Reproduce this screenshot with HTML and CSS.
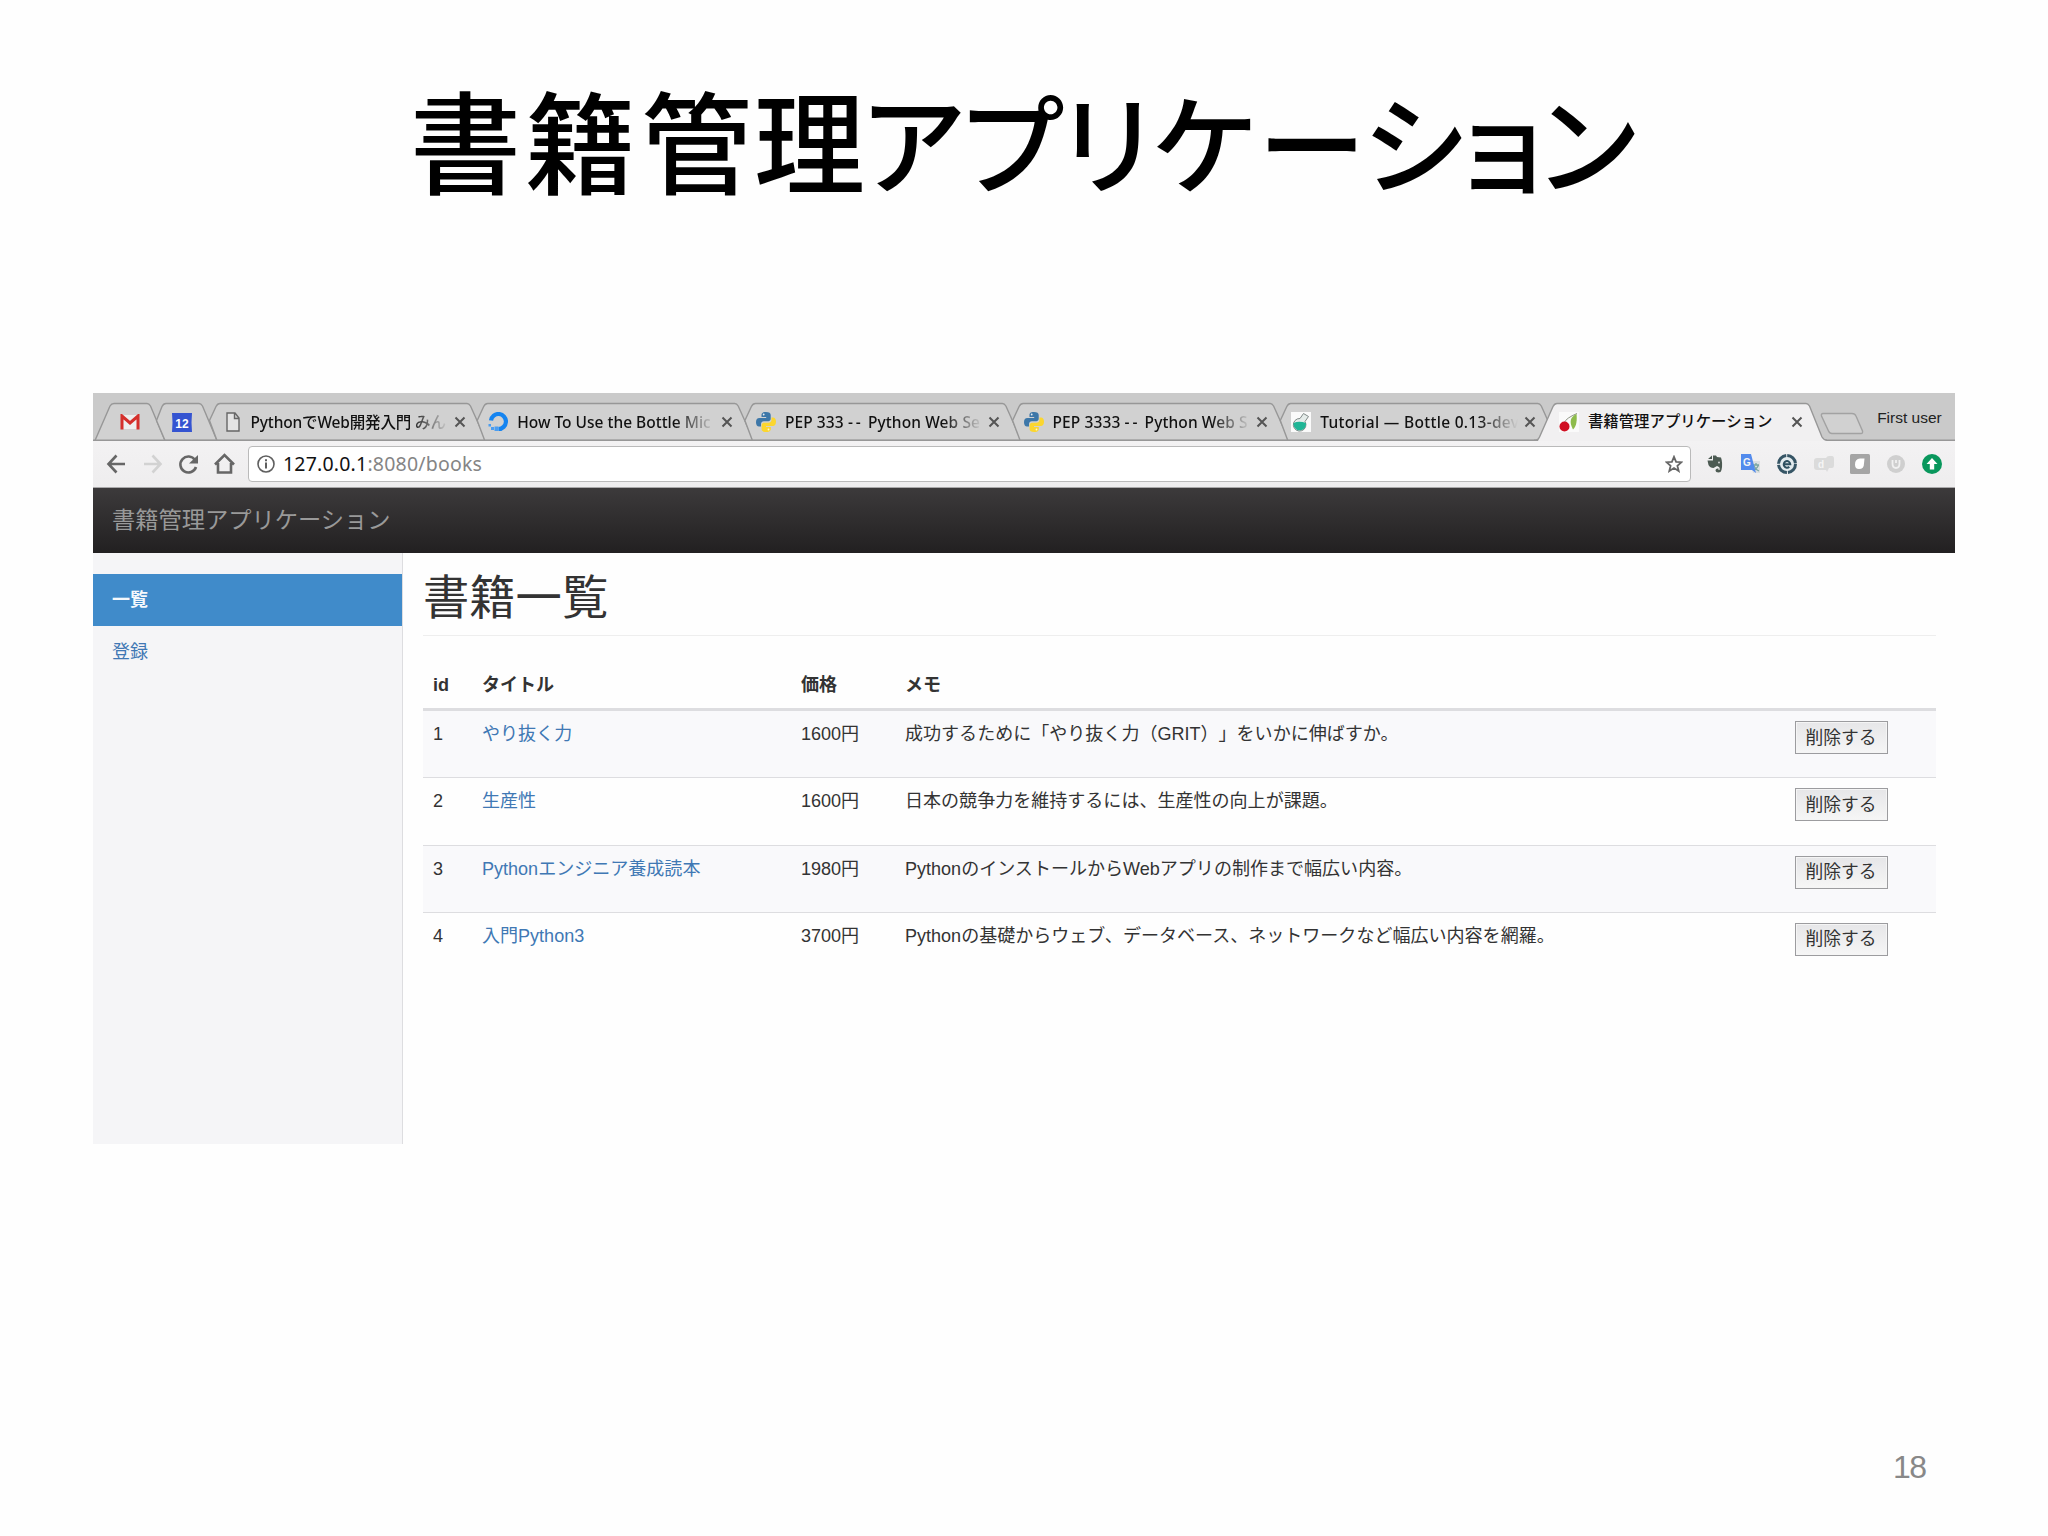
FILE: index.html
```html
<!DOCTYPE html>
<html lang="ja">
<head>
<meta charset="utf-8">
<title>書籍管理アプリケーション</title>
<link rel="stylesheet" href="styles.css">
</head>
<body>
<main class="slide">
  <svg class="slide-title" viewBox="0 0 2048 393" role="heading">
    <text y="186" x="410 525 641 754 859 957 1054 1151 1258 1362 1449 1534">書籍管理<tspan class="kana">アプリケーション</tspan></text>
  </svg>

  <section class="browser">
    <div class="tabstrip">
      <svg class="tab-shapes" viewBox="93 393 1862 48">
        <g fill="#d1d1d1" stroke="#979797" stroke-width="1.4">
          <path d="M95 440.500 110 406Q111.500 403.500 114 403.500H147Q149 403.500 150.500 406L165 440.500"/>
          <path d="M156.500 420.500 162 406.500Q163.500 403.500 166 403.500H199Q201 403.500 202.500 406L217 440.500H165Z"/>
          <path id="t" d="M209.500 420.500 216 406.500Q217.500 403.500 220 403.500H467Q469 403.500 470.500 406L486 440.500H217Z"/>
          <use href="#t" x="267.700"/><use href="#t" x="535.400"/><use href="#t" x="803.100"/><use href="#t" x="1070.800"/>
        </g>
        <path d="M93 440.300H1955" stroke="#979797" stroke-width="1.4"/>
        <path d="M1533 441H1538L1553 406.500Q1554.500 403.500 1557 403.500H1806Q1808 403.500 1809.500 406L1822 437Q1824 440.300 1827 440.300V442H1533Z" fill="#f1f0f1"/>
        <path d="M1534 440.300Q1538 440.500 1539.500 437L1553 406.500Q1554.500 403.500 1557 403.500H1806Q1808 403.500 1809.500 406L1822 437Q1824 440.300 1827 440.300" fill="none" stroke="#979797" stroke-width="1.4"/>
        <path d="M1823 413.500H1852Q1855 413.500 1856 416L1862.500 431Q1863 433.500 1861 433.500H1832Q1829.500 433.500 1828.500 431L1821.500 416Q1821 413.500 1823 413.500Z" fill="#d1d1d1" stroke="#a2a2a2" stroke-width="1.4"/>
      </svg>
      <div class="tabs">
        <svg class="pin-gmail" viewBox="0 0 20 16"><rect x="1" y="1" width="18" height="14" fill="#eee"/><path d="M2 15.500V2L10 9 18 2V15.500" fill="none" stroke="#d5302c" stroke-width="3"/></svg>
        <svg class="pin-cal" viewBox="0 0 20 19"><path d="M0 0H20L19.500 9.500 20 19H0L.5 9.500Z" fill="#3554d1"/><text x="10" y="14.500" text-anchor="middle">12</text></svg>
        <div class="tab tab-first">
          <svg class="fav doc" viewBox="0 0 14 20"><path d="M1 1H9L13 6V19H1ZM8.500 1V6.500H13" fill="#e4e4e4" stroke="#666" stroke-width="1.4"/></svg>
          <span class="name n1">PythonでWeb開発入門 みん</span>
          <svg class="close" viewBox="0 0 12 12"><path d="M1.500 1.500 10.500 10.500M10.500 1.500 1.500 10.500"/></svg>
        </div>
        <div class="tab">
          <svg class="fav" viewBox="0 0 20 20"><path d="M10 17A7.500 7.500 0 1 0 2.500 8.500" transform="translate(.5 0)" fill="none" stroke="#1584f0" stroke-width="4.200"/><path d="M6.500 14.500H10.500V19H6.500ZM3 15H6V18H3ZM.5 12H3V14.500H.5Z" fill="#4b9df0"/></svg>
          <span class="name n2">How To Use the Bottle Mic</span>
          <svg class="close" viewBox="0 0 12 12"><path d="M1.500 1.500 10.500 10.500M10.500 1.500 1.500 10.500"/></svg>
        </div>
        <div class="tab">
          <svg class="fav" viewBox="0 0 20 20"><g id="py"><path d="M10 0C6 0 5.500 1.500 5.500 3V5H10.200V6H3.500C1.200 6 0 7.500 0 10.200S1.300 14.500 3 14.500H5V12C5 10.500 6.200 9.200 7.800 9.200H12.300C13.600 9.200 14.700 8 14.700 6.700V3C14.700 1.200 13.200 0 10 0Z" fill="#3d77a8"/><path d="M10.200 20C14 20 14.800 18.500 14.800 17V15H10V14H16.700C19 14 20 12.500 20 9.800S18.900 5.500 17 5.500H15.500V8C15.500 9.600 14.200 10.800 12.500 10.800H8C6.700 10.800 5.600 12 5.600 13.300V17C5.600 18.800 7 20 10.200 20Z" fill="#fbd62f"/><circle cx="7.700" cy="2.500" r=".9" fill="#e8eef3"/><circle cx="12.500" cy="17.500" r=".9" fill="#fff7d0"/></g></svg>
          <span class="name n3">PEP 333 <i>--</i> Python Web Se</span>
          <svg class="close" viewBox="0 0 12 12"><path d="M1.500 1.500 10.500 10.500M10.500 1.500 1.500 10.500"/></svg>
        </div>
        <div class="tab">
          <svg class="fav" viewBox="0 0 20 20"><use href="#py"/></svg>
          <span class="name n4">PEP 3333 <i>--</i> Python Web S</span>
          <svg class="close" viewBox="0 0 12 12"><path d="M1.500 1.500 10.500 10.500M10.500 1.500 1.500 10.500"/></svg>
        </div>
        <div class="tab">
          <svg class="fav" viewBox="0 0 20 20"><rect width="20" height="20" fill="#fafafa"/><path d="M12.500 1.500 17.500 4.500 14 9.500A6.300 6.300 0 1 1 9 6.500Z" fill="#e5ecea" stroke="#808987"/><path d="M2.500 11Q8 8.500 15 11A6.200 6.200 0 0 1 2.500 13Z" fill="#20b596"/></svg>
          <span class="name n5">Tutorial — Bottle 0.13-dev</span>
          <svg class="close" viewBox="0 0 12 12"><path d="M1.500 1.500 10.500 10.500M10.500 1.500 1.500 10.500"/></svg>
        </div>
        <div class="tab active">
          <svg class="fav" viewBox="0 0 20 20"><rect width="20" height="20" fill="#fafafa"/><path d="M5 11Q7 6 18 1.500" fill="none" stroke="#8c9482"/><path d="M17.500 2C11 5 10 10 14 17.500C18 14 18 7 17.500 2Z" fill="#8dbb4b"/><circle cx="5.500" cy="14.500" r="5" fill="#d00f22"/></svg>
          <span class="name n6">書籍管理アプリケーション</span>
          <svg class="close" viewBox="0 0 12 12"><path d="M1.500 1.500 10.500 10.500M10.500 1.500 1.500 10.500"/></svg>
        </div>
        <span class="profile">First user</span>
      </div>
    </div>

    <div class="toolbar">
      <svg class="nav-icons" viewBox="0 0 140 24" fill="none" stroke="#666" stroke-width="2.600">
        <path d="M21 12H5M12.500 3.500 4.500 12 12.500 20.500"/>
        <path d="M40 12H56M48.500 3.500 56.500 12 48.500 20.500" stroke="#d2d2d2"/>
        <path d="M91 8A8 8 0 1 0 92 15"/><path d="M94 3V11.500H85Z" fill="#666" stroke="none"/>
        <path d="M111 12.500 120.500 3 130 12.500M114 11V20.500H127V11"/>
      </svg>
      <div class="omnibox">
        <svg class="info" viewBox="0 0 18 18"><circle cx="9" cy="9" r="8" fill="none" stroke="#5f5f5f" stroke-width="1.600"/><path d="M8 7.500H10V13.500H8ZM8 4.200H10V6.200H8Z" fill="#5f5f5f"/></svg>
        <span class="url"><b>127.0.0.1</b>:8080/books</span>
        <svg class="star" viewBox="0 0 18 18"><path d="M9 1.800 11.100 6.800 16.500 7.200 12.400 10.700 13.700 16 9 13.100 4.300 16 5.600 10.700 1.500 7.200 6.900 6.800Z" fill="none" stroke="#666" stroke-width="1.800"/></svg>
      </div>
      <div class="extensions">
        <svg viewBox="0 0 20 20"><path d="M3 5 7 1.500V5ZM8 1.500H11L12 3 16 3.500Q18 9 16.500 16Q16 18.500 13.500 18.500Q10.500 18.500 10.500 16Q11 14 13.500 14.500V16H14.500Q15.500 13 12 12L8.500 14Q5 14 3.500 11L2.500 6.500H8Z" fill="#4c5a52"/><circle cx="14" cy="8.500" r=".9" fill="#ddd"/></svg>
        <svg viewBox="0 0 20 20"><path d="M9 7H19V19H12Z" fill="#dcdfe1"/><path d="M12 11H18M15 9V11M17.500 11Q16 15 12 16M13 12Q15 16 18 17" stroke="#79a5a0" stroke-width="1.300" fill="none"/><path d="M0 0H10L15 19 11 16H0Z" fill="#528bed"/><text x="6" y="12" class="ext-text g">G</text></svg>
        <svg viewBox="0 0 20 20"><circle cx="10" cy="10" r="8.500" fill="#e3ebee" stroke="#365565" stroke-width="3" stroke-dasharray="12.300 1.050"/><path d="M6.500 10.200H13.300A3.300 3.300 0 1 0 12.300 12.800" fill="none" stroke="#2e5060" stroke-width="2"/></svg>
        <svg viewBox="0 0 20 20"><path d="M3 4H12Q13 2 15 2H18Q20 2 20 5V11Q20 14 18 14H15L13 18 12 16H3Q0 16 0 13V7Q0 4 3 4Z" fill="#dbdbdb"/><text x="7" y="14" class="ext-text">d</text></svg>
        <svg viewBox="0 0 20 20"><rect width="20" height="20" rx="1.500" fill="#a5a5a5"/><path d="M5 10.500Q5 5 10 4.500L14.500 4.500 14 9.500Q14 15 9 15Q5 15 5 10.500Z" fill="#fff"/></svg>
        <svg viewBox="0 0 20 20"><circle cx="10" cy="10" r="9" fill="#cfcfcf"/><path d="M6.500 6V9.500Q6.500 14 10 14T13.500 9.500V6M10 6V9" fill="none" stroke="#f1f1f1" stroke-width="1.800"/></svg>
        <svg viewBox="0 0 20 20"><circle cx="10" cy="10" r="10" fill="#09975c"/><path d="M10 4 15.500 10H12.200V15.500H7.800V10H4.500Z" fill="#fff"/></svg>
      </div>
    </div>

    <header class="navbar">書籍管理アプリケーション</header>

    <div class="page">
      <nav class="sidebar">
        <a class="current">一覧</a>
        <a>登録</a>
      </nav>
      <div class="content">
        <h1>書籍一覧</h1>
        <table>
          <colgroup><col class="c-id"><col class="c-title"><col class="c-price"><col class="c-memo"><col></colgroup>
          <thead><tr><th>id</th><th>タイトル</th><th>価格</th><th>メモ</th><th></th></tr></thead>
          <tbody>
            <tr><td>1</td><td><a>やり抜く力</a></td><td>1600円</td><td>成功するために「やり抜く力（GRIT）」をいかに伸ばすか。</td><td class="action"><button>削除する</button></td></tr>
            <tr><td>2</td><td><a>生産性</a></td><td>1600円</td><td>日本の競争力を維持するには、生産性の向上が課題。</td><td class="action"><button>削除する</button></td></tr>
            <tr><td>3</td><td><a>Pythonエンジニア養成読本</a></td><td>1980円</td><td>PythonのインストールからWebアプリの制作まで幅広い内容。</td><td class="action"><button>削除する</button></td></tr>
            <tr><td>4</td><td><a>入門Python3</a></td><td>3700円</td><td>Pythonの基礎からウェブ、データベース、ネットワークなど幅広い内容を網羅。</td><td class="action"><button>削除する</button></td></tr>
          </tbody>
        </table>
      </div>
    </div>
  </section>

  <footer class="page-number">18</footer>
</main>
</body>
</html>
```
FILE: styles.css
```css
* { box-sizing: border-box; }

body {
  margin: 0;
  background: #fefefe;
  font-family: "Liberation Sans", "Noto Sans CJK JP", sans-serif;
  color: #333;
  text-spacing-trim: space-all;
}

.slide {
  width: 2048px;
  height: 1536px;
  display: flex;
  flex-direction: column;
  overflow: hidden;
}

.slide-title {
  width: 2048px;
  height: 393px;
  flex: none;
  font-family: "Noto Sans CJK JP", sans-serif;
  font-size: 111px;
  font-weight: 500;
  fill: #000;
}
.slide-title .kana { font-size: 108px; }

.browser {
  width: 1862px;
  height: 751px;
  margin-left: 93px;
  flex: none;
  display: flex;
  flex-direction: column;
}

/* Tab strip: outlines and tab contents share one grid cell */
.tabstrip {
  display: grid;
  height: 48px;
  flex: none;
  background: #cacaca;
}

.tab-shapes,
.tabs { grid-area: 1 / 1; }

.tab-shapes {
  width: 1862px;
  height: 48px;
}

.tabs {
  display: flex;
  align-items: center;
  height: 48px;
  padding: 10px 0 0 27px;
  z-index: 1;
}

.pin-gmail { width: 20px; height: 16px; margin-right: 32px; }
.pin-cal {
  width: 20px;
  height: 19px;
  margin-right: 27px;
  font: 700 12px "Liberation Sans", sans-serif;
}
.pin-cal text { fill: #fff; }

.tab {
  width: 267.7px;
  height: 38px;
  flex: none;
  display: flex;
  align-items: center;
  padding-left: 1.500px;
}

.tab-first { padding-left: 7px; }

.fav {
  width: 20px;
  height: 20px;
  flex: none;
  margin-right: 9px;
}

.fav.doc { width: 14px; margin-right: 10.500px; }

.name {
  width: 198px;
  flex: none;
  white-space: nowrap;
  font: 500 15.500px/24px "Noto Sans", "Noto Sans CJK JP", sans-serif;
  color: #111;
  -webkit-mask-image: linear-gradient(90deg, #000 80%, transparent 100%);
  mask-image: linear-gradient(90deg, #000 80%, transparent 100%);
}
.name i { font-style: normal; letter-spacing: 3px; }

.n1 { letter-spacing: -.15px; }
.n3, .n4 { letter-spacing: .1px; }
.n5 { letter-spacing: .3px; }
.n6 { font-size: 15.400px; }

.active .name { -webkit-mask-image: none; mask-image: none; }

.close {
  width: 12px;
  height: 12px;
  margin-left: 5.500px;
  flex: none;
  stroke: #555;
  stroke-width: 2;
}

.profile {
  margin: -8px 0 0 52px;
  font-size: 15.500px;
  white-space: nowrap;
  color: #222;
}

.toolbar {
  height: 47px;
  flex: none;
  display: flex;
  align-items: center;
  background: linear-gradient(#f3f2f3, #eeedee);
  border-bottom: 1px solid #a9a8a9;
}

.nav-icons {
  width: 140px;
  height: 24px;
  margin: 0 4px 0 11px;
}

.omnibox {
  width: 1443px;
  height: 36px;
  display: flex;
  align-items: center;
  padding: 0 7px 0 8px;
  background: #fff;
  border: 1.500px solid #bababa;
  border-radius: 4px;
}

.info { width: 18px; height: 18px; }

.url {
  margin-left: 8px;
  flex: 1;
  font: 400 19.500px/26px "Noto Sans", sans-serif;
  letter-spacing: .2px;
  color: #858585;
}
.url b { font-weight: 400; color: #111; }

.star { width: 18px; height: 18px; }

.extensions {
  display: flex;
  gap: 16.200px;
  margin-left: 14px;
}
.extensions svg { width: 20px; height: 20px; }
.ext-text {
  font: 700 10px "Liberation Sans", sans-serif;
  text-anchor: middle;
  fill: #f5f5f5;
}

.navbar {
  height: 65px;
  flex: none;
  padding: 0 19px;
  background: linear-gradient(#3c3a3b, #222021);
  color: #999;
  font-size: 23.250px;
  line-height: 65px;
}

.page {
  flex: 1;
  display: flex;
  min-height: 0;
}

.sidebar {
  width: 310px;
  flex: none;
  padding-top: 21px;
  background: #f5f5f7;
  border-right: 1.500px solid #dddde0;
}

.sidebar a {
  display: block;
  height: 51.500px;
  padding-left: 19px;
  font-size: 18px;
  line-height: 53px;
  color: #4078b4;
}

.sidebar .current {
  background: #408bca;
  color: #f4f8fc;
  font-weight: 700;
}

.content {
  flex: 1;
  padding: 18px 19px 0 20px;
}

h1 {
  height: 65px;
  margin: 0 0 26px;
  font-size: 46.300px;
  font-weight: 400;
  line-height: 55px;
  border-bottom: 1.500px solid #eee;
}

table {
  width: 1513px;
  table-layout: fixed;
  border-collapse: separate;
  border-spacing: 0;
  font-size: 18.050px;
  line-height: 25.700px;
}

.c-id { width: 49px; }
.c-title { width: 319px; }
.c-price { width: 104px; }
.c-memo { width: 890px; }

th,
td {
  padding: 11px 10px 9px;
  text-align: left;
  vertical-align: top;
  white-space: nowrap;
}

th {
  height: 49px;
  font-weight: 700;
  border-bottom: 3px solid #dddde0;
}

td {
  height: 67.300px;
  border-bottom: 1.500px solid #dddde0;
}

.action { padding-top: 10px; }

tbody tr:last-child td { border-bottom: 0; }
tbody tr:nth-child(odd) td { background: #f9f9fb; }

td a { color: #4078b4; }

button {
  display: block;
  width: 93px;
  height: 33px;
  padding: 0 1px 4px 0;
  border: 1.500px solid #9c9c9f;
  border-radius: 0;
  background: linear-gradient(#e6e6e8, #f6f6f6);
  box-shadow: inset 0 0 0 1px #f5f5f5;
  font: 17.800px/26px "Noto Sans CJK JP", sans-serif;
  color: #333;
}

.page-number {
  margin: 307px 0 0 1893px;
  font-size: 32px;
  line-height: 32px;
  letter-spacing: -1.500px;
  color: #888;
}
```
